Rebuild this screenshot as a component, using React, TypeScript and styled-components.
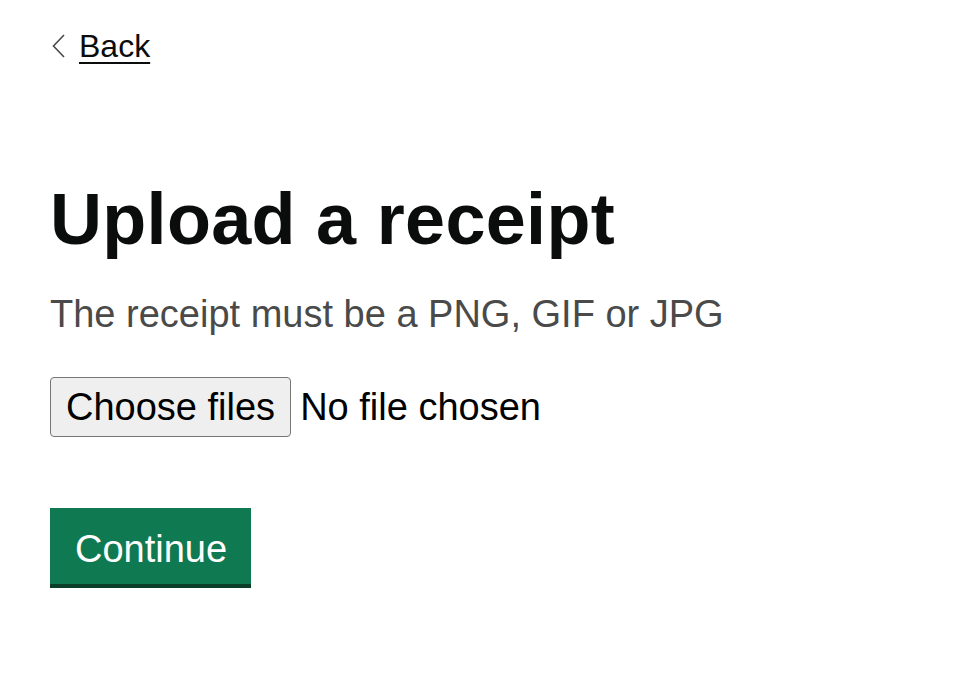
import styled, { createGlobalStyle } from "styled-components";
import { useRef, useState } from "react";

const GlobalStyle = createGlobalStyle`
  html, body {
    margin: 0;
    padding: 0;
    background: #ffffff;
  }
  body {
    font-family: "Liberation Sans", Arial, sans-serif;
    color: #0b0c0c;
  }
`;

const Page = styled.main`
  display: flex;
  flex-direction: column;
  align-items: flex-start;
  padding: 26px 50px 60px;
`;

const BackLink = styled.a`
  display: inline-flex;
  align-items: center;
  gap: 14px;
  font-size: 32px;
  line-height: 40px;
  color: #0b0c0c;
  text-decoration: underline;
  text-decoration-thickness: 2px;
  text-underline-offset: 5px;
  cursor: pointer;
  margin-left: 2px;
`;

const Chevron = styled.svg`
  width: 13px;
  height: 24px;
  flex: none;
`;

const Heading = styled.h1`
  margin: 113px 0 0;
  font-size: 72px;
  line-height: 80px;
  font-weight: 700;
  letter-spacing: 0.3px;
  color: #0b0c0c;
`;

const Hint = styled.p`
  margin: 30px 0 0;
  font-size: 38px;
  line-height: 50px;
  color: #4a4a4a;
`;

const FileRow = styled.div`
  display: flex;
  align-items: center;
  gap: 9px;
  margin-top: 38px;
  font-size: 38px;
`;

const HiddenInput = styled.input`
  display: none;
`;

const FileButton = styled.button`
  height: 60px;
  padding: 0 15px;
  border: 1px solid #767676;
  border-radius: 4px;
  background: #efefef;
  font-family: inherit;
  font-size: 38px;
  color: #000000;
  cursor: pointer;
`;

const FileName = styled.span`
  color: #000000;
`;

const ContinueButton = styled.button`
  margin-top: 71px;
  height: 76px;
  padding: 5px 24px 0 25px;
  border: none;
  border-radius: 0;
  background: #0f7a52;
  box-shadow: 0 4px 0 #0b3d28;
  color: #ffffff;
  font-family: inherit;
  font-size: 38px;
  line-height: 1;
  cursor: pointer;
`;

const App = () => {
  const inputRef = useRef<HTMLInputElement>(null);
  const [files, setFiles] = useState<FileList | null>(null);

  const label =
    !files || files.length === 0
      ? "No file chosen"
      : files.length === 1
      ? files[0].name
      : `${files.length} files`;

  return (
    <>
      <GlobalStyle />
      <Page>
        <BackLink href="#">
          <Chevron viewBox="0 0 13 24">
            <polyline
              points="12,1 1.5,12 12,23"
              fill="none"
              stroke="#4a4a4a"
              strokeWidth="1.6"
            />
          </Chevron>
          Back
        </BackLink>
        <Heading>Upload a receipt</Heading>
        <Hint>The receipt must be a PNG, GIF or JPG</Hint>
        <FileRow>
          <HiddenInput
            ref={inputRef}
            type="file"
            multiple
            accept="image/png,image/gif,image/jpeg"
            onChange={(e) => setFiles(e.target.files)}
          />
          <FileButton type="button" onClick={() => inputRef.current?.click()}>
            Choose files
          </FileButton>
          <FileName>{label}</FileName>
        </FileRow>
        <ContinueButton type="button">Continue</ContinueButton>
      </Page>
    </>
  );
};

export default App;
